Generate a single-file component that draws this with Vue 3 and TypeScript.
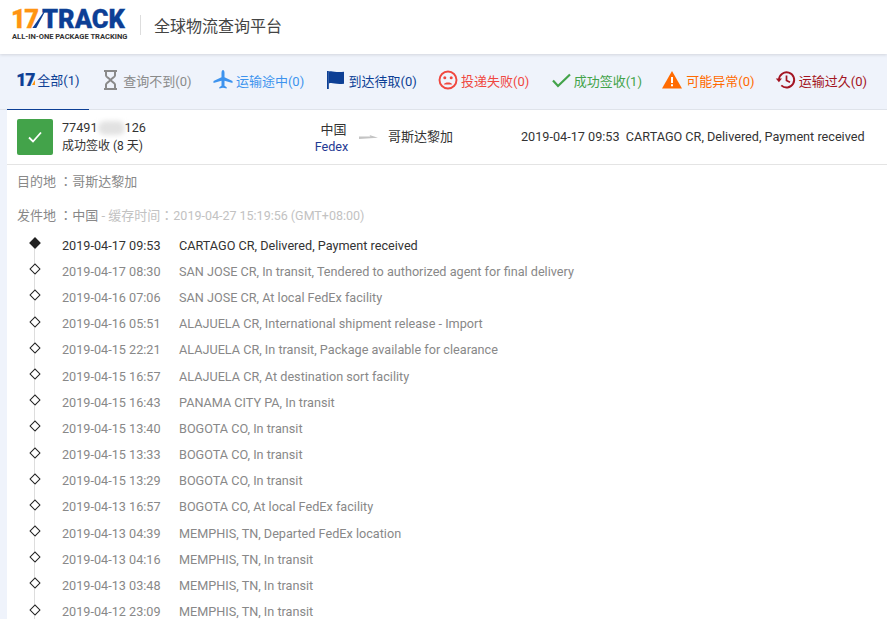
<script setup lang="ts">
interface Tab {
  label: string
  count: number
  icon: string
  color: string
}

const tabs: Tab[] = [
  { label: '全部', count: 1, icon: 'logo', color: '#0d3f95' },
  { label: '查询不到', count: 0, icon: 'hourglass', color: '#8a8a8a' },
  { label: '运输途中', count: 0, icon: 'plane', color: '#3d93ee' },
  { label: '到达待取', count: 0, icon: 'flag', color: '#0d3f95' },
  { label: '投递失败', count: 0, icon: 'sad', color: '#f0473f' },
  { label: '成功签收', count: 1, icon: 'check', color: '#43a34a' },
  { label: '可能异常', count: 0, icon: 'warn', color: '#ff6a00' },
  { label: '运输过久', count: 0, icon: 'history', color: '#a31422' },
]

const events: [string, string][] = [
  ['2019-04-17 09:53', 'CARTAGO CR, Delivered, Payment received'],
  ['2019-04-17 08:30', 'SAN JOSE CR, In transit, Tendered to authorized agent for final delivery'],
  ['2019-04-16 07:06', 'SAN JOSE CR, At local FedEx facility'],
  ['2019-04-16 05:51', 'ALAJUELA CR, International shipment release - Import'],
  ['2019-04-15 22:21', 'ALAJUELA CR, In transit, Package available for clearance'],
  ['2019-04-15 16:57', 'ALAJUELA CR, At destination sort facility'],
  ['2019-04-15 16:43', 'PANAMA CITY PA, In transit'],
  ['2019-04-15 13:40', 'BOGOTA CO, In transit'],
  ['2019-04-15 13:33', 'BOGOTA CO, In transit'],
  ['2019-04-15 13:29', 'BOGOTA CO, In transit'],
  ['2019-04-13 16:57', 'BOGOTA CO, At local FedEx facility'],
  ['2019-04-13 04:39', 'MEMPHIS, TN, Departed FedEx location'],
  ['2019-04-13 04:16', 'MEMPHIS, TN, In transit'],
  ['2019-04-13 03:48', 'MEMPHIS, TN, In transit'],
  ['2019-04-12 23:09', 'MEMPHIS, TN, In transit'],
]
</script>

<template>
  <div class="page">
    <header class="top">
      <div class="logo">
        <div class="logo-main"><span class="orange">17</span><i class="wedge"></i><span class="navy">TRACK</span></div>
        <div class="logo-sub">ALL-IN-ONE PACKAGE TRACKING</div>
      </div>
      <span class="divider"></span>
      <h1 class="title">全球物流查询平台</h1>
    </header>

    <nav class="tabs">
      <a
        v-for="(tab, i) in tabs"
        :key="tab.label"
        class="tab"
        :class="{ active: i === 0 }"
        :style="{ color: tab.color }"
      >
        <span v-if="tab.icon === 'logo'" class="mini-logo">17<i></i></span>
        <svg v-else class="icon" viewBox="0 0 20 20" aria-hidden="true">
          <path
            v-if="tab.icon === 'hourglass'"
            d="M4 1h13M4 19h13M6 1v4.500c0 2 4 2.800 4 4.500s-4 2.500-4 4.500V19M15 1v4.500c0 2-4 2.800-4 4.500s4 2.500 4 4.500V19"
            fill="none"
            stroke="currentColor"
            stroke-width="2"
          />
          <path
            v-else-if="tab.icon === 'plane'"
            d="M10 0c1 0 1.500 1.400 1.500 3v4.200L19.500 11v2l-8-2.300v5l2.200 1.600v1.200L10 17.700 6.300 18.500v-1.200l2.200-1.600v-5l-8 2.300v-2l8-3.800V3C8.500 1.400 9 0 10 0z"
            fill="currentColor"
          />
          <template v-else-if="tab.icon === 'flag'">
            <path d="M2 1h1.800v18H2z" fill="currentColor" />
            <path d="M3.800 1.500c4-1.200 6 1.300 15.200.2v12c-9.200 1-11.200-1.500-15.200-.2z" fill="currentColor" />
          </template>
          <template v-else-if="tab.icon === 'sad'">
            <circle cx="10" cy="10" r="8.500" fill="none" stroke="currentColor" stroke-width="1.900" />
            <circle cx="6.800" cy="7.800" r="1.500" fill="currentColor" />
            <circle cx="13.200" cy="7.800" r="1.500" fill="currentColor" />
            <path d="M5.800 14.500c1-2.600 7.400-2.600 8.400 0z" fill="currentColor" />
          </template>
          <path
            v-else-if="tab.icon === 'check'"
            d="M2 10.500l5 5.500L19 4.500"
            fill="none"
            stroke="currentColor"
            stroke-width="2.200"
          />
          <template v-else-if="tab.icon === 'warn'">
            <path d="M9 1L19 18.500H-1z" fill="currentColor" />
            <path d="M8 7h2v6H8zM8 14.200h2v2H8z" fill="#fff" />
          </template>
          <template v-else-if="tab.icon === 'history'">
            <path d="M3 9.500a7.600 7.600 0 1 1 2.300 5.900" fill="none" stroke="currentColor" stroke-width="1.900" />
            <path d="M-.2 8.500h6.200L2.900 12.300z" fill="currentColor" />
            <path d="M10.500 5.500v5l3.500 1.800" fill="none" stroke="currentColor" stroke-width="1.700" />
          </template>
        </svg>
        <span class="tab-label">{{ tab.label }}({{ tab.count }})</span>
      </a>
    </nav>

    <main class="content">
      <section class="summary">
        <span class="status-box">
          <svg viewBox="0 0 14 12" width="14" height="12" aria-hidden="true">
            <path d="M1 6.500l4 4L13 1.500" fill="none" stroke="#fff" stroke-width="1.800" />
          </svg>
        </span>
        <div class="number">
          <div class="track-no">77491<span class="blur"></span>126</div>
          <div class="state">成功签收 (8 天)</div>
        </div>
        <div class="origin">
          <div class="country">中国</div>
          <div class="carrier">Fedex</div>
        </div>
        <span class="arrow"></span>
        <div class="dest">哥斯达黎加</div>
        <div class="last-event">2019-04-17 09:53&nbsp; CARTAGO CR, Delivered, Payment received</div>
      </section>

      <section class="detail">
        <p class="meta">目的地 <span class="colon">：</span>哥斯达黎加</p>
        <p class="meta">发件地 <span class="colon">：</span>中国 <span class="cache">- 缓存时间<span class="colon">：</span><span class="stamp">2019-04-27 15:19:56 (GMT+08:00)</span></span></p>

        <ul class="timeline">
          <li v-for="(ev, i) in events" :key="i" class="event" :class="{ latest: i === 0 }">
            <span class="node"><i class="diamond"></i></span>
            <time class="time">{{ ev[0] }}</time>
            <span class="text">{{ ev[1] }}</span>
          </li>
        </ul>
      </section>
    </main>
  </div>
</template>

<style>
html,
body {
  margin: 0;
  overflow: hidden;
}
</style>

<style scoped>
.page {
  height: 619px;
  overflow: hidden;
  background: #eff3fb;
  font-family: Roboto, "Noto Sans CJK SC", sans-serif;
  font-size: 13px;
  color: #333;
  display: flex;
  flex-direction: column;
}
.top {
  height: 54px;
  flex: none;
  background: #fff;
  display: flex;
  align-items: center;
  padding: 0 0 5px 11px;
  box-sizing: border-box;
  box-shadow: 0 1px 3px rgba(0, 0, 0, 0.12);
  position: relative;
}
.logo {
  width: 118px;
  margin-top: 1px;
}
.logo-main {
  font-weight: 900;
  font-size: 25.500px;
  line-height: 20px;
  height: 20px;
  white-space: nowrap;
  display: flex;
  position: relative;
  -webkit-text-stroke: 0.3px currentColor;
}
.orange {
  color: #ff9412;
  letter-spacing: -1.600px;
  width: 27px;
}
.wedge {
  position: absolute;
  left: 19px;
  top: 1px;
  width: 15px;
  height: 18px;
  background: #0d3f95;
  clip-path: polygon(100% 0, 100% 8%, 42% 100%, 16% 100%);
}
.navy {
  color: #0d3f95;
  margin-left: 4px;
}
.logo-sub {
  font-weight: 700;
  font-size: 7.550px;
  line-height: 9px;
  margin-top: 3px;
  padding-left: 1px;
  color: #333;
  white-space: nowrap;
}
.divider {
  width: 1px;
  height: 20px;
  background: #ddd;
  margin-left: 11px;
}
.title {
  margin: 0 0 0 13px;
  font-size: 16px;
  font-weight: 400;
  color: #444;
}
.tabs {
  height: 56px;
  flex: none;
  display: flex;
  padding-left: 7px;
  border-bottom: 1px solid #dfe3ea;
  box-sizing: border-box;
}
.tab {
  display: flex;
  align-items: center;
  justify-content: flex-end;
  gap: 3px;
  width: 112.600px;
  height: 55px;
  padding: 0 10px 3px 0;
  box-sizing: border-box;
  white-space: nowrap;
}
.tab.active {
  width: 82px;
  height: 56px;
  padding: 0 9.500px 4px 0;
  border-bottom: 1px solid #0d3f95;
}
.mini-logo {
  position: relative;
  font-weight: 900;
  font-size: 17.500px;
  letter-spacing: -1px;
  width: 18px;
  -webkit-text-stroke: 0.2px currentColor;
}
.mini-logo i {
  position: absolute;
  right: -1px;
  bottom: 5px;
  border-bottom: 5px solid #ff9412;
  border-left: 3px solid transparent;
}
.icon {
  width: 20px;
  height: 20px;
  flex: none;
  overflow: visible;
}
.content {
  flex: 1;
  margin-left: 7px;
  background: #fff;
  min-height: 0;
}
.summary {
  height: 54px;
  display: flex;
  align-items: center;
  padding-left: 10px;
  border-bottom: 1px solid #e4e4e4;
  color: #333;
  font-size: 12.660px;
  line-height: 18px;
}
.status-box {
  width: 36px;
  height: 36px;
  border-radius: 2px;
  background: #43a34a;
  display: flex;
  align-items: center;
  justify-content: center;
  flex: none;
}
.number {
  margin-left: 9px;
  width: 249px;
}
.track-no {
  display: flex;
}
.state {
  font-size: 12px;
}
.blur {
  display: inline-block;
  width: 27px;
  height: 14px;
  margin-top: 2px;
  background: #e2e2e2;
  border-radius: 7px;
  filter: blur(2.500px);
}
.origin {
  width: 42px;
  margin-top: 2px;
  line-height: 17px;
  text-align: center;
  padding-right: 1px;
  box-sizing: border-box;
}
.country {
  font-size: 13px;
  padding-left: 4px;
}
.carrier {
  color: #1f3a93;
}
.arrow {
  width: 19px;
  height: 4px;
  margin-left: 6px;
  background: #c4c4c4;
  clip-path: polygon(0 35%, 60% 35%, 55% 0, 100% 70%, 0 100%);
}
.dest {
  margin-left: 10px;
  width: 133px;
  font-size: 13px;
}
.last-event {
  white-space: nowrap;
}
.detail {
  padding-left: 10px;
}
.meta {
  margin: 0;
  height: 34px;
  line-height: 34px;
  color: #888;
  font-size: 13px;
}
.colon {
  font-family: Roboto, "Noto Sans CJK TC", sans-serif;
}
.cache {
  color: #c2c2c2;
}
.stamp {
  font-size: 12.500px;
}
.timeline {
  list-style: none;
  margin: -1px 0 0;
  padding: 0 0 0 7px;
}
.event {
  display: flex;
  align-items: center;
  height: 26.200px;
  color: #888;
  font-size: 12.660px;
  white-space: nowrap;
}
.event.latest {
  color: #333;
}
.node {
  width: 0;
  position: relative;
  align-self: stretch;
}
.node::after {
  content: "";
  position: absolute;
  left: 10px;
  top: 17px;
  width: 1px;
  height: 20px;
  background: #ddd;
}
.diamond {
  position: absolute;
  left: 7px;
  top: 7px;
  width: 6px;
  height: 6px;
  border: 1px solid #222;
  transform: rotate(45deg);
  background: #fff;
  box-sizing: content-box;
}
.latest .diamond {
  background: #222;
}
.time {
  margin-left: 38px;
  width: 117px;
  flex: none;
}
</style>
